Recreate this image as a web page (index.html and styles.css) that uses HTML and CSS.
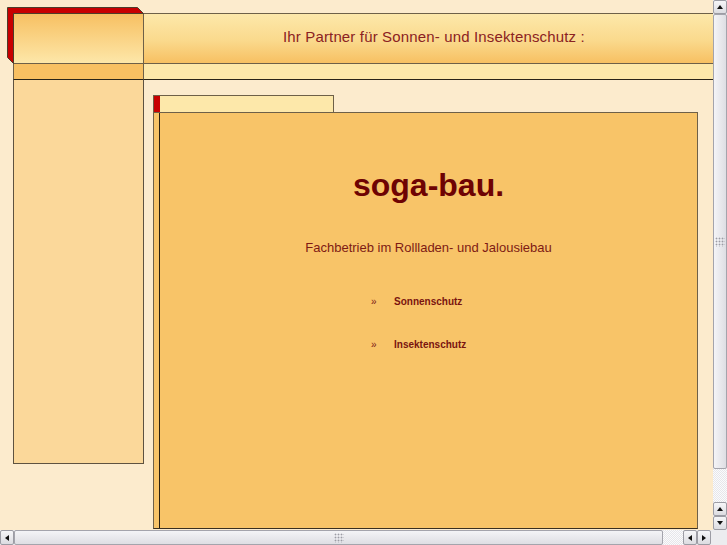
FILE: index.html
```html
<!DOCTYPE html>
<html lang="de">
<head>
<meta charset="utf-8">
<title>soga-bau.</title>
<link rel="stylesheet" href="styles.css">
</head>
<body>
<div class="window">
  <div class="mainrow">
    <div class="viewport">
      <svg class="corner" width="150" height="70" viewBox="0 0 150 70" aria-hidden="true">
        <polygon points="7.5,7.5 137.5,7.5 143.5,13.5 13.5,13.5 13.5,63.5 7.5,57.5" fill="#c80000" stroke="#4d3d2a" stroke-width="1"/>
      </svg>
      <div class="page">
        <div class="hdr">
          <div class="hdr-left"></div>
          <div class="hdr-right">Ihr Partner für Sonnen- und Insektenschutz :</div>
          <div class="sub-left"></div>
          <div class="sub-right"></div>
        </div>
        <div class="body">
          <div class="sidebar"></div>
          <div class="content">
            <div class="tab"><span class="tab-mark"></span></div>
            <div class="panel">
              <div class="strip"></div>
              <div class="panel-main">
                <h1 class="title">soga-bau.</h1>
                <p class="subtitle">Fachbetrieb im Rollladen- und Jalousiebau</p>
                <ul class="links">
                  <li><span class="raquo">»</span><a href="#">Sonnenschutz</a></li>
                  <li><span class="raquo">»</span><a href="#">Insektenschutz</a></li>
                </ul>
              </div>
            </div>
          </div>
        </div>
      </div>
    </div>
    <div class="vscroll">
      <div class="btn up"></div>
      <div class="thumb-v"><span class="grip"></span></div>
      <div class="track"></div>
      <div class="btn up"></div>
      <div class="btn down"></div>
    </div>
  </div>
  <div class="hscroll">
    <div class="btn left"></div>
    <div class="thumb-h"><span class="grip"></span></div>
    <div class="track"></div>
    <div class="btn left"></div>
    <div class="btn right"></div>
    <div class="gap"></div>
    <div class="scorner"></div>
  </div>
</div>
</body>
</html>
```

FILE: styles.css
```css
* { box-sizing: border-box; }
html, body { margin: 0; padding: 0; }
body {
  width: 727px;
  height: 545px;
  overflow: hidden;
  font-family: "Liberation Sans", Arial, sans-serif;
  background: #fcebcd;
}
.window { display: flex; flex-direction: column; width: 727px; height: 545px; }
.mainrow { display: flex; height: 530px; }
.viewport {
  position: relative;
  width: 713px;
  height: 530px;
  overflow: hidden;
  background: #fcebcd;
}
.corner { position: absolute; left: 0; top: 0; z-index: 2; }
.page { width: 740px; padding: 13px 0 0 13px; }

.hdr {
  display: grid;
  grid-template-columns: 131px 1fr;
  grid-template-rows: 50px 17px;
}
.hdr-left {
  border-left: 1px solid #6e6048;
  border-right: 1px solid #6e6048;
  border-top: 1px solid #6e6048;
  background: linear-gradient(#f7c062, #fde7a9);
}
.hdr-right {
  border-top: 1px solid #6e6048;
  background: linear-gradient(#fde8aa, #fad98c 55%, #f7c062);
  color: #8b2222;
  font-size: 15px;
  letter-spacing: 0.15px;
  padding: 14px 0 0 139px;
  line-height: 18px;
}
.sub-left {
  border-left: 1px solid #6e6048;
  border-right: 1px solid #6e6048;
  border-top: 1px solid #6e6048;
  border-bottom: 1px solid #2a2418;
  background: #f8c062;
}
.sub-right {
  border-top: 1px solid #6e6048;
  border-bottom: 1px solid #2a2418;
  background: #fde8aa;
}

.body { display: flex; align-items: flex-start; }
.sidebar {
  width: 131px;
  height: 384px;
  border-left: 1px solid #5e5240;
  border-right: 1px solid #5e5240;
  border-bottom: 1px solid #5e5240;
  background: #fbd89a;
  flex: none;
}
.content { padding: 15px 0 0 9px; }
.tab {
  display: flex;
  width: 181px;
  height: 17px;
  border: 1px solid #6e6048;
  border-bottom: none;
  background: #fde8aa;
}
.tab-mark { width: 6px; background: #c80000; }
.panel {
  display: flex;
  width: 545px;
  height: 417px;
  border: 1px solid #6e6048;
  border-bottom-color: #3a3020;
  background: #f8c468;
}
.strip { width: 6px; border-right: 1px solid #2a2010; flex: none; }
.panel-main { flex: 1; padding-top: 54px; text-align: center; }
.title {
  margin: 0;
  font-size: 32px;
  line-height: 36px;
  font-weight: bold;
  color: #6e0303;
}
.subtitle {
  margin: 37px 0 0;
  font-size: 13px;
  line-height: 16px;
  color: #7e1a14;
}
.links {
  list-style: none;
  margin: 40px 0 0;
  padding: 0 0 0 211px;
  display: flex;
  flex-direction: column;
  gap: 31px;
  text-align: left;
}
.links li { display: flex; align-items: baseline; font-size: 10px; line-height: 12px; }
.raquo { width: 23px; color: #7e1a14; font-size: 10px; }
.links a { color: #7a1410; font-weight: bold; text-decoration: none; }

/* scrollbars */
.vscroll {
  width: 14px;
  height: 530px;
  display: flex;
  flex-direction: column;
  background: #ececef;
}
.hscroll { display: flex; height: 15px; background: #ececef; }
.btn {
  flex: none;
  width: 14px;
  height: 14px;
  border: 1px solid #9c9ca4;
  border-radius: 2px;
  background: linear-gradient(#f6f6f8, #dcdce1);
  display: flex;
  align-items: center;
  justify-content: center;
}
.hscroll .btn { height: 15px; }
.btn::after { content: ""; width: 0; height: 0; border: 3px solid transparent; }
.btn.up::after { border-bottom: 4px solid #111; border-top: 0; }
.btn.down::after { border-top: 4px solid #111; border-bottom: 0; }
.btn.left::after { border-right: 4px solid #111; border-left: 0; }
.btn.right::after { border-left: 4px solid #111; border-right: 0; }
.thumb-v {
  height: 455px;
  border: 1px solid #a4a4ac;
  border-radius: 2px;
  background: linear-gradient(90deg, #f4f4f7, #dedee3);
  display: flex;
  align-items: center;
  justify-content: center;
}
.thumb-h {
  width: 649px;
  border: 1px solid #a4a4ac;
  border-radius: 2px;
  background: linear-gradient(#f4f4f7, #dedee3);
  display: flex;
  align-items: center;
  justify-content: center;
}
.grip {
  width: 10px;
  height: 10px;
  background: radial-gradient(circle, #9c9ca4 0.8px, transparent 1.1px) 0 0 / 3px 3px;
}
.vscroll .track { height: 33px; }
.hscroll .track { width: 20px; }
.track {
  flex: none;
  background: repeating-conic-gradient(#fbfbfc 0 25%, #e6e6ea 0 50%) 0 0 / 2px 2px;
}
.gap { width: 2px; }
.scorner { width: 14px; background: #ececef; }
```
